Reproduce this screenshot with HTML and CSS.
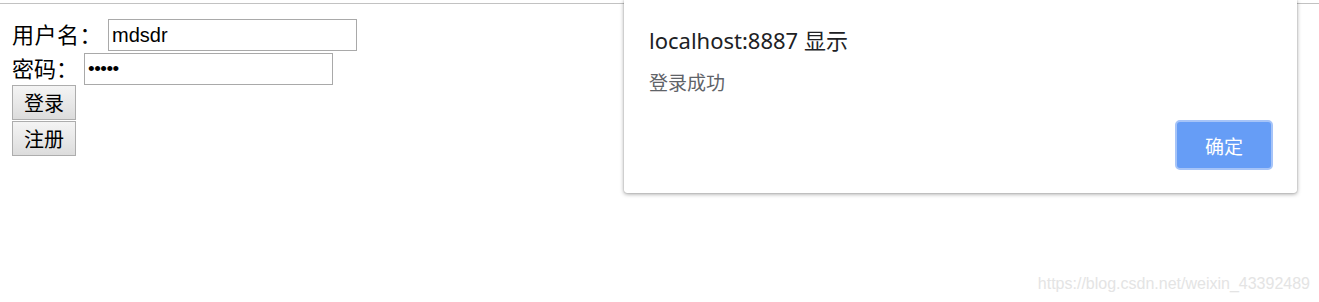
FILE: index.html
```html
<!DOCTYPE html>
<html lang="zh-CN">
<head>
<meta charset="utf-8">
<title>登录</title>
<link rel="stylesheet" href="styles.css">
</head>
<body>
<div class="topline"></div>
<form class="login">
  <div class="row">
    <span class="label label-user">用户名：</span>
    <input class="field field-user" type="text" value="mdsdr">
  </div>
  <div class="row">
    <span class="label label-pass">密码：</span>
    <input class="field field-pass" type="password" value="mdsdr">
  </div>
  <button class="btn" type="button">登录</button>
  <button class="btn btn-second" type="button">注册</button>
</form>

<div class="dialog">
  <div class="dialog-title"><span class="dialog-host">localhost:8887</span> 显示</div>
  <div class="dialog-msg">登录成功</div>
  <div class="dialog-actions">
    <button class="dialog-ok" type="button">确定</button>
  </div>
</div>

<div class="watermark">https://blog.csdn.net/weixin_43392489</div>
</body>
</html>
```

FILE: styles.css
```css
html, body {
  margin: 0;
  padding: 0;
  background: #ffffff;
}

body {
  font-family: "Noto Sans CJK SC", "Noto Sans", sans-serif;
  color: #000;
  position: relative;
  height: 302px;
  overflow: hidden;
}

.topline {
  margin-top: 3px;
  height: 1px;
  background: #c2c2c2;
}

.login {
  padding: 15px 0 0 12px;
}

.row {
  display: flex;
  align-items: center;
  height: 32px;
  margin-bottom: 2px;
}

.row + .row {
  margin-bottom: 0;
}

.label {
  font-size: 22px;
  line-height: 28px;
  margin-top: -4px;
  white-space: nowrap;
}

.label-user {
  letter-spacing: 0.5px;
}

.field {
  box-sizing: border-box;
  width: 249px;
  height: 32px;
  border: 1px solid #a9a9a9;
  padding: 0 3px;
  margin: 0;
  font-family: "Liberation Sans", Arial, sans-serif;
  font-size: 20px;
  color: #000;
  background: #fff;
  outline: none;
}

.field-user {
  margin-left: 6px;
}

.field-pass {
  margin-left: 6px;
  font-size: 19px;
  letter-spacing: -0.5px;
}

.btn {
  display: block;
  box-sizing: border-box;
  width: 64px;
  height: 35px;
  margin: 0;
  padding: 0;
  border: 1px solid #adadad;
  border-radius: 0;
  background: linear-gradient(#f4f4f4, #e6e6e6 60%, #dcdcdc);
  font-family: "Noto Sans CJK SC", sans-serif;
  font-size: 20px;
  line-height: 26px;
  color: #000;
}

.btn-second {
  margin-top: 1px;
}

.dialog {
  position: absolute;
  left: 624px;
  top: 0;
  width: 673px;
  height: 193px;
  box-sizing: border-box;
  background: #fff;
  border-radius: 0 0 3px 3px;
  box-shadow: 0 1px 4px rgba(0, 0, 0, 0.38), 0 0 1px rgba(0, 0, 0, 0.35);
  padding: 25px 24px 0 25px;
  display: flex;
  flex-direction: column;
}

.dialog-title {
  font-family: "Noto Sans", "Noto Sans CJK SC", sans-serif;
  font-size: 22px;
  line-height: 30px;
  color: #202124;
}

.dialog-msg {
  margin-top: 15px;
  font-family: "Noto Sans CJK SC", sans-serif;
  font-size: 19px;
  line-height: 24px;
  color: #5f6368;
}

.dialog-actions {
  display: flex;
  justify-content: flex-end;
  margin-top: 26px;
}

.dialog-ok {
  box-sizing: border-box;
  width: 98px;
  height: 50px;
  border: 2px solid #a6c4f8;
  border-radius: 5px;
  background: #669df6;
  color: #fff;
  font-family: "Noto Sans CJK SC", sans-serif;
  font-size: 19px;
  padding: 0;
}

.watermark {
  position: absolute;
  right: 9px;
  bottom: 9px;
  font-family: "Liberation Sans", Arial, sans-serif;
  font-size: 16px;
  color: #e4e4e4;
}
```
